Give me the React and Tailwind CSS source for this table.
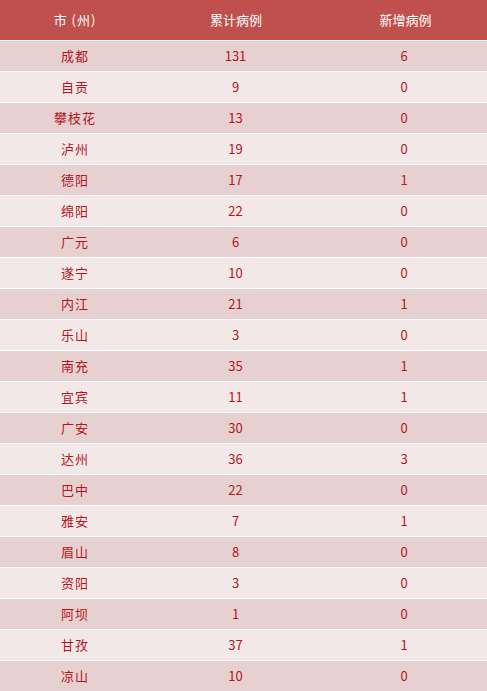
import React from "react";

const rows = [
  ["成都", 131, 6],
  ["自贡", 9, 0],
  ["攀枝花", 13, 0],
  ["泸州", 19, 0],
  ["德阳", 17, 1],
  ["绵阳", 22, 0],
  ["广元", 6, 0],
  ["遂宁", 10, 0],
  ["内江", 21, 1],
  ["乐山", 3, 0],
  ["南充", 35, 1],
  ["宜宾", 11, 1],
  ["广安", 30, 0],
  ["达州", 36, 3],
  ["巴中", 22, 0],
  ["雅安", 7, 1],
  ["眉山", 8, 0],
  ["资阳", 3, 0],
  ["阿坝", 1, 0],
  ["甘孜", 37, 1],
  ["凉山", 10, 0],
];

const font = { fontFamily: '"Noto Sans CJK SC", "Noto Sans", sans-serif' };

export default function App() {
  return (
    <div className="w-[487px] h-[691px] overflow-hidden bg-white" style={font}>
      {/* header */}
      <div className="grid grid-cols-[150px_170px_167px] gap-x-px h-10 bg-[#c0504d] text-white text-[13px]">
        <div className="flex items-center justify-center tracking-[1px]">市 (州)</div>
        <div className="flex items-center justify-center">累计病例</div>
        <div className="flex items-center justify-center">新增病例</div>
      </div>

      {/* body */}
      <div className="flex flex-col gap-px pt-px bg-white">
        {rows.map(([city, total, added], i) => (
          <div
            key={city}
            className={
              "grid grid-cols-[150px_169px_166px] gap-x-px h-[30px] text-[13px] text-[#b3161c] " +
              (i % 2 === 0 ? "bg-[#e7d0d0]" : "bg-[#f2e8e8]")
            }
          >
            <div className="flex items-center justify-center tracking-[1px]">{city}</div>
            <div className="flex items-center justify-center">{total}</div>
            <div className="flex items-center justify-center">{added}</div>
          </div>
        ))}
      </div>
    </div>
  );
}
